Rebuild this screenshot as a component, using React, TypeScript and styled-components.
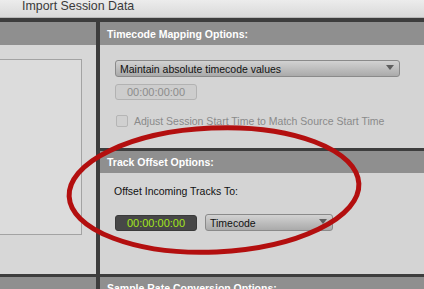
import styled, { createGlobalStyle } from 'styled-components'

const Global = createGlobalStyle`
  html, body {
    margin: 0;
    padding: 0;
    background: #d4d4d4;
  }
  body {
    font-family: "Liberation Sans", Arial, sans-serif;
  }
`

const Page = styled.div`
  position: relative;
  width: 424px;
  height: 289px;
  overflow: hidden;
  background: #d4d4d4;
`

const TitleBar = styled.div`
  height: 17px;
  border-bottom: 1px solid #b8b8b8;
  background: linear-gradient(#ececec, #d9d9d9);
  padding-left: 22px;
  display: flex;
  align-items: flex-end;
  overflow: hidden;
`

const Title = styled.span`
  font-size: 12.4px;
  color: #3a3a3a;
  line-height: 13px;
  margin-bottom: 4px;
`

const TopRule = styled.div`
  height: 4px;
  background: #3d3d3d;
`

const Columns = styled.div`
  display: flex;
`

const Column = styled.div<{ $width?: number }>`
  display: flex;
  flex-direction: column;
  width: ${p => (p.$width ? `${p.$width}px` : 'auto')};
  flex: ${p => (p.$width ? 'none' : '1')};
`

const Divider = styled.div`
  width: 4px;
  background: #3d3d3d;
  align-self: stretch;
`

const Header = styled.div<{ $h: number }>`
  height: ${p => p.$h}px;
  background: #8f8f8f;
  color: #fff;
  font-weight: bold;
  font-size: 10.5px;
  display: flex;
  align-items: center;
  padding-left: 7px;
  white-space: nowrap;
`

const Rule = styled.div`
  height: 3px;
  background: #3d3d3d;
`

const Body = styled.div<{ $h: number }>`
  height: ${p => p.$h}px;
  box-sizing: border-box;
  padding: 0 0 0 15px;
  display: flex;
  flex-direction: column;
`

const LeftBody = styled.div`
  height: 229px;
  padding-top: 14px;
  box-sizing: border-box;
  background: #d7d7d7;
`

const ListBox = styled.div`
  width: 82px;
  height: 176px;
  box-sizing: border-box;
  border: 1px solid #a3a3a3;
  border-left: none;
  background: #dcdcdc;
`

const Select = styled.div<{ $w: number }>`
  width: ${p => p.$w}px;
  height: 17px;
  box-sizing: border-box;
  border: 1px solid #8a8a8a;
  border-radius: 3px;
  background: linear-gradient(#d2d2d2, #aaaaaa);
  font-size: 10.5px;
  color: #111;
  display: flex;
  align-items: center;
  padding-left: 4px;
  position: relative;
  &::after {
    content: '';
    position: absolute;
    right: 5px;
    top: 4px;
    border-left: 4px solid transparent;
    border-right: 4px solid transparent;
    border-top: 5px solid #5e5e5e;
  }
`

const TimeField = styled.div<{ $live?: boolean }>`
  width: 82px;
  height: 16px;
  box-sizing: border-box;
  border-radius: 3px;
  border: 1px solid ${p => (p.$live ? '#3a3a3a' : '#b2b2b2')};
  background: ${p => (p.$live ? '#474747' : '#cdcdcd')};
  color: ${p => (p.$live ? '#a3e61c' : '#8c8c8c')};
  font-size: 11px;
  display: flex;
  align-items: center;
  justify-content: center;
`

const Row = styled.div<{ $gap: number }>`
  display: flex;
  align-items: center;
  gap: ${p => p.$gap}px;
`

const Check = styled.div`
  width: 12px;
  height: 12px;
  box-sizing: border-box;
  border: 1px solid #b5b5b5;
  border-radius: 2px;
  background: #d0d0d0;
`

const Label = styled.span<{ $muted?: boolean }>`
  font-size: 10.5px;
  color: ${p => (p.$muted ? '#8a8a8a' : '#111')};
  white-space: nowrap;
`

const Ring = styled.svg`
  position: absolute;
  left: 0;
  top: 0;
  pointer-events: none;
`

export default function App() {
  return (
    <Page>
      <Global />
      <TitleBar>
        <Title>Import Session Data</Title>
      </TitleBar>
      <TopRule />
      <Columns>
        <Column $width={96}>
          <Header $h={23} />
          <LeftBody>
            <ListBox />
          </LeftBody>
          <Rule />
          <Header $h={22} />
        </Column>
        <Divider />
        <Column>
          <Header $h={23}>Timecode Mapping Options:</Header>
          <Body $h={103} style={{ paddingTop: 15 }}>
            <Select $w={285}>Maintain absolute timecode values</Select>
            <div style={{ height: 7 }} />
            <TimeField>00:00:00:00</TimeField>
            <div style={{ height: 15 }} />
            <Row $gap={6} style={{ paddingLeft: 1 }}>
              <Check />
              <Label $muted>Adjust Session Start Time to Match Source Start Time</Label>
            </Row>
          </Body>
          <Rule />
          <Header $h={22}>Track Offset Options:</Header>
          <Body $h={101} style={{ paddingTop: 12 }}>
            <Label style={{ marginLeft: -1 }}>Offset Incoming Tracks To:</Label>
            <div style={{ height: 17 }} />
            <Row $gap={8}>
              <TimeField $live>00:00:00:00</TimeField>
              <Select $w={128}>Timecode</Select>
            </Row>
          </Body>
          <Rule />
          <Header $h={22}>Sample Rate Conversion Options:</Header>
        </Column>
      </Columns>
      <Ring width="424" height="289" viewBox="0 0 424 289">
        <ellipse
          cx="214"
          cy="190"
          rx="145"
          ry="62"
          fill="none"
          stroke="#b30f0f"
          strokeWidth="5"
          transform="rotate(-2.5 214 190)"
        />
      </Ring>
    </Page>
  )
}
